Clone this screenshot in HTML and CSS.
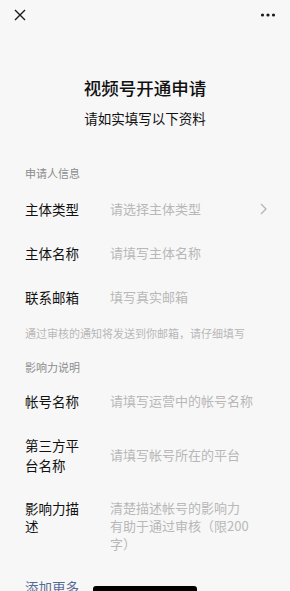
FILE: index.html
```html
<!DOCTYPE html>
<html lang="zh-CN">
<head>
  <meta charset="UTF-8">
  <meta name="viewport" content="width=device-width, initial-scale=1.0">
  <title>视频号开通申请</title>
  <link rel="stylesheet" href="styles.css">
</head>
<body>

  <div class="nav">
    <svg class="close" width="12" height="12" viewBox="0 0 12 12">
      <path d="M1 1L11 11M11 1L1 11" stroke="#1a1a1a" stroke-width="1.4" fill="none"/>
    </svg>
    <svg class="more" width="16" height="4" viewBox="0 0 16 4">
      <circle cx="2.5" cy="2" r="1.6" fill="#1a1a1a"/>
      <circle cx="8" cy="2" r="1.6" fill="#1a1a1a"/>
      <circle cx="13.5" cy="2" r="1.6" fill="#1a1a1a"/>
    </svg>
  </div>

  <div class="header">
    <h1 class="title">视频号开通申请</h1>
    <p class="subtitle">请如实填写以下资料</p>
  </div>

  <div class="section-title first">申请人信息</div>
  <div class="form">
    <div class="row">
      <label class="label">主体类型</label>
      <div class="value placeholder">请选择主体类型</div>
      <svg class="arrow" width="7" height="12" viewBox="0 0 7 12">
        <path d="M1 1L6 6L1 11" stroke="#b2b2b2" stroke-width="1.2" fill="none"/>
      </svg>
    </div>
    <div class="row">
      <label class="label">主体名称</label>
      <input class="value" type="text" placeholder="请填写主体名称">
    </div>
    <div class="row">
      <label class="label">联系邮箱</label>
      <input class="value" type="text" placeholder="填写真实邮箱">
    </div>
  </div>
  <div class="tips">通过审核的通知将发送到你邮箱，请仔细填写</div>

  <div class="section-title">影响力说明</div>
  <div class="form">
    <div class="row">
      <label class="label">帐号名称</label>
      <input class="value" type="text" placeholder="请填写运营中的帐号名称">
    </div>
    <div class="row">
      <label class="label">第三方平台名称</label>
      <input class="value" type="text" placeholder="请填写帐号所在的平台">
    </div>
    <div class="row top">
      <label class="label">影响力描述</label>
      <textarea class="value desc" rows="3" placeholder="清楚描述帐号的影响力&#10;有助于通过审核（限200字）"></textarea>
    </div>
  </div>

  <div class="more-link">添加更多</div>

  <div class="home-bar"></div>

</body>
</html>
```

FILE: styles.css
```css
*{
  margin: 0;
  padding: 0;
  box-sizing: border-box;
}
body{
  background: #f7f7f7;
  font-family: "Noto Sans CJK SC", "Noto Sans", sans-serif;
  color: #111;
  overflow: hidden;
}
.nav{
  height: 30px;
  display: flex;
  align-items: center;
  justify-content: space-between;
  padding: 0 14px;
}
.header{
  text-align: center;
  margin-top: 46px;
}
.header .title{
  font-size: 17.5px;
  line-height: 24px;
  font-weight: 500;
}
.header .subtitle{
  font-size: 13.5px;
  line-height: 20px;
  margin-top: 8px;
}
.section-title{
  font-size: 11px;
  line-height: 16px;
  color: #8c8c8c;
  padding: 0 25px;
  margin-top: 18px;
  margin-bottom: 4px;
}
.section-title.first{
  margin-top: 37px;
  margin-bottom: 6px;
}
.form .row{
  display: flex;
  align-items: center;
  padding: 12px 25px;
}
.form .row.top{
  align-items: flex-start;
}
.form .label{
  width: 56px;
  flex-shrink: 0;
  font-size: 13.5px;
  line-height: 20px;
  margin-right: 29px;
}
.form .row.top .label{
  line-height: 18px;
}
.form .value{
  flex: 1;
  font-family: inherit;
  font-size: 13px;
  line-height: 20px;
  color: #111;
  border: none;
  outline: none;
  background: transparent;
}
.form .value::placeholder,
.form .placeholder{
  color: #b8b8b8;
}
.form .desc{
  flex: none;
  width: 146px;
  line-height: 18px;
  resize: none;
  overflow: hidden;
}
.form .arrow{
  margin-left: 8px;
  margin-right: -2px;
}
.tips{
  font-size: 11px;
  line-height: 16px;
  color: #b8b8b8;
  padding: 0 25px;
  margin-top: 6px;
}
.more-link{
  font-size: 13.5px;
  line-height: 20px;
  color: #576b95;
  padding: 0 25px;
  margin-top: 12px;
}
.home-bar{
  position: fixed;
  left: 93px;
  bottom: 0;
  width: 104px;
  height: 5px;
  border-radius: 3px 3px 0 0;
  background: #000;
}
```
